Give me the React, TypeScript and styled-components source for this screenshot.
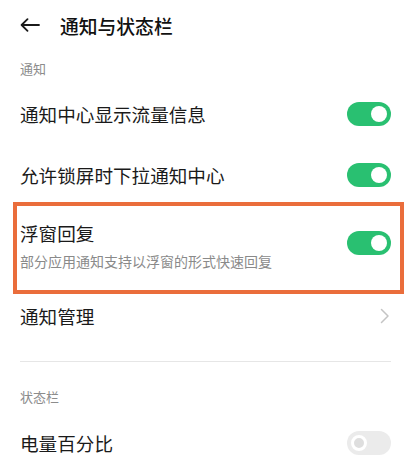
import React, { useState } from "react";
import styled, { createGlobalStyle } from "styled-components";

const GlobalStyle = createGlobalStyle`
    body {
        margin: 0;
        background: #ffffff;
        font-family: "Noto Sans CJK SC", "Noto Sans", sans-serif;
        color: #1a1a1a;
    }
`;

type Item = {
    title: string;
    on: boolean;
};

const App = () => {
    const [items, setItems] = useState<Item[]>([
        { title: "通知中心显示流量信息", on: true },
        { title: "允许锁屏时下拉通知中心", on: true },
    ]);
    const [floatReply, setFloatReply] = useState(true);
    const [battery, setBattery] = useState(false);

    const toggle = (idx: number) => {
        setItems(items.map((it, i) => (i === idx ? { ...it, on: !it.on } : it)));
    };

    return (
        <Page>
            <GlobalStyle />
            <Header>
                <BackButton aria-label="返回">
                    <svg width="20" height="14" viewBox="0 0 20 14" fill="none">
                        <path d="M19 7H2M7.5 1.2L1.6 7l5.9 5.8" stroke="#1a1a1a" strokeWidth="1.8" strokeLinecap="round" strokeLinejoin="round" />
                    </svg>
                </BackButton>
                <Title>通知与状态栏</Title>
            </Header>

            <SectionLabel>通知</SectionLabel>
            <Row $height={56}>
                <RowTitle>{items[0].title}</RowTitle>
                <Switch $on={items[0].on} onClick={() => toggle(0)} />
            </Row>
            <Row $height={54} $top={6}>
                <RowTitle>{items[1].title}</RowTitle>
                <Switch $on={items[1].on} onClick={() => toggle(1)} />
            </Row>

            <Highlight>
                <TextCol>
                    <RowTitle>浮窗回复</RowTitle>
                    <RowSub>部分应用通知支持以浮窗的形式快速回复</RowSub>
                </TextCol>
                <HighlightSwitch $on={floatReply} onClick={() => setFloatReply(!floatReply)} />
            </Highlight>

            <Row $height={44}>
                <RowTitle>通知管理</RowTitle>
                <Chevron width="10" height="16" viewBox="0 0 10 16" fill="none">
                    <path d="M1.5 1.5L8 8l-6.5 6.5" stroke="#c4c4c4" strokeWidth="1.5" strokeLinecap="round" strokeLinejoin="round" />
                </Chevron>
            </Row>

            <Divider />

            <SectionLabel $top={16}>状态栏</SectionLabel>
            <Row $height={58}>
                <RowTitle>电量百分比</RowTitle>
                <Switch $on={battery} onClick={() => setBattery(!battery)} />
            </Row>
        </Page>
    );
};
export default App;

const Page = styled.div`
    width: 418px;
    height: 471px;
    overflow: hidden;
    padding: 0 27px 0 20px;
    box-sizing: border-box;
    background: #ffffff;
`;

const Header = styled.div`
    height: 50px;
    display: flex;
    align-items: center;
    gap: 20px;
`;

const BackButton = styled.button`
    display: flex;
    align-items: center;
    padding: 0;
    margin: 0;
    border: none;
    background: transparent;
    cursor: pointer;
`;

const Title = styled.h1`
    margin: 0;
    font-size: 18.8px;
    font-weight: 500;
    color: #111111;
`;

const SectionLabel = styled.div<{ $top?: number }>`
    height: 36px;
    margin-top: ${(p) => p.$top ?? 0}px;
    display: flex;
    align-items: center;
    font-size: 13px;
    color: #8c8c8c;
`;

const Row = styled.div<{ $height: number; $top?: number }>`
    height: ${(p) => p.$height}px;
    margin-top: ${(p) => p.$top ?? 0}px;
    display: flex;
    align-items: center;
    justify-content: space-between;
`;

const RowTitle = styled.div`
    font-size: 18.6px;
    line-height: 24px;
    color: #1a1a1a;
`;

const RowSub = styled.div`
    font-size: 14px;
    line-height: 20px;
    margin-top: 6px;
    color: #8a8a8a;
    white-space: nowrap;
`;

const TextCol = styled.div`
    display: flex;
    flex-direction: column;
`;

const Highlight = styled.div`
    margin: 0 -13px 0 -7px;
    height: 92px;
    box-sizing: border-box;
    border: 4px solid #ea6d3b;
    padding: 15px 9px 0 3px;
    display: flex;
    align-items: flex-start;
    justify-content: space-between;
`;

const Switch = styled.button<{ $on: boolean }>`
    position: relative;
    width: 44px;
    height: 24px;
    padding: 0;
    border: none;
    border-radius: 12px;
    cursor: pointer;
    flex-shrink: 0;
    background: ${(p) => (p.$on ? "#29c071" : "#ebebeb")};

    &::after {
        content: "";
        position: absolute;
        top: 4px;
        left: ${(p) => (p.$on ? "24px" : "4px")};
        width: 16px;
        height: 16px;
        box-sizing: border-box;
        border-radius: 50%;
        background: ${(p) => (p.$on ? "#ffffff" : "#dedede")};
        border: ${(p) => (p.$on ? "none" : "3px solid #ffffff")};
    }
`;

const HighlightSwitch = styled(Switch)`
    margin-top: 10px;
`;

const Chevron = styled.svg`
    margin-right: 1px;
`;

const Divider = styled.div`
    height: 1px;
    margin-top: 23px;
    background: #e6e6e6;
`;
